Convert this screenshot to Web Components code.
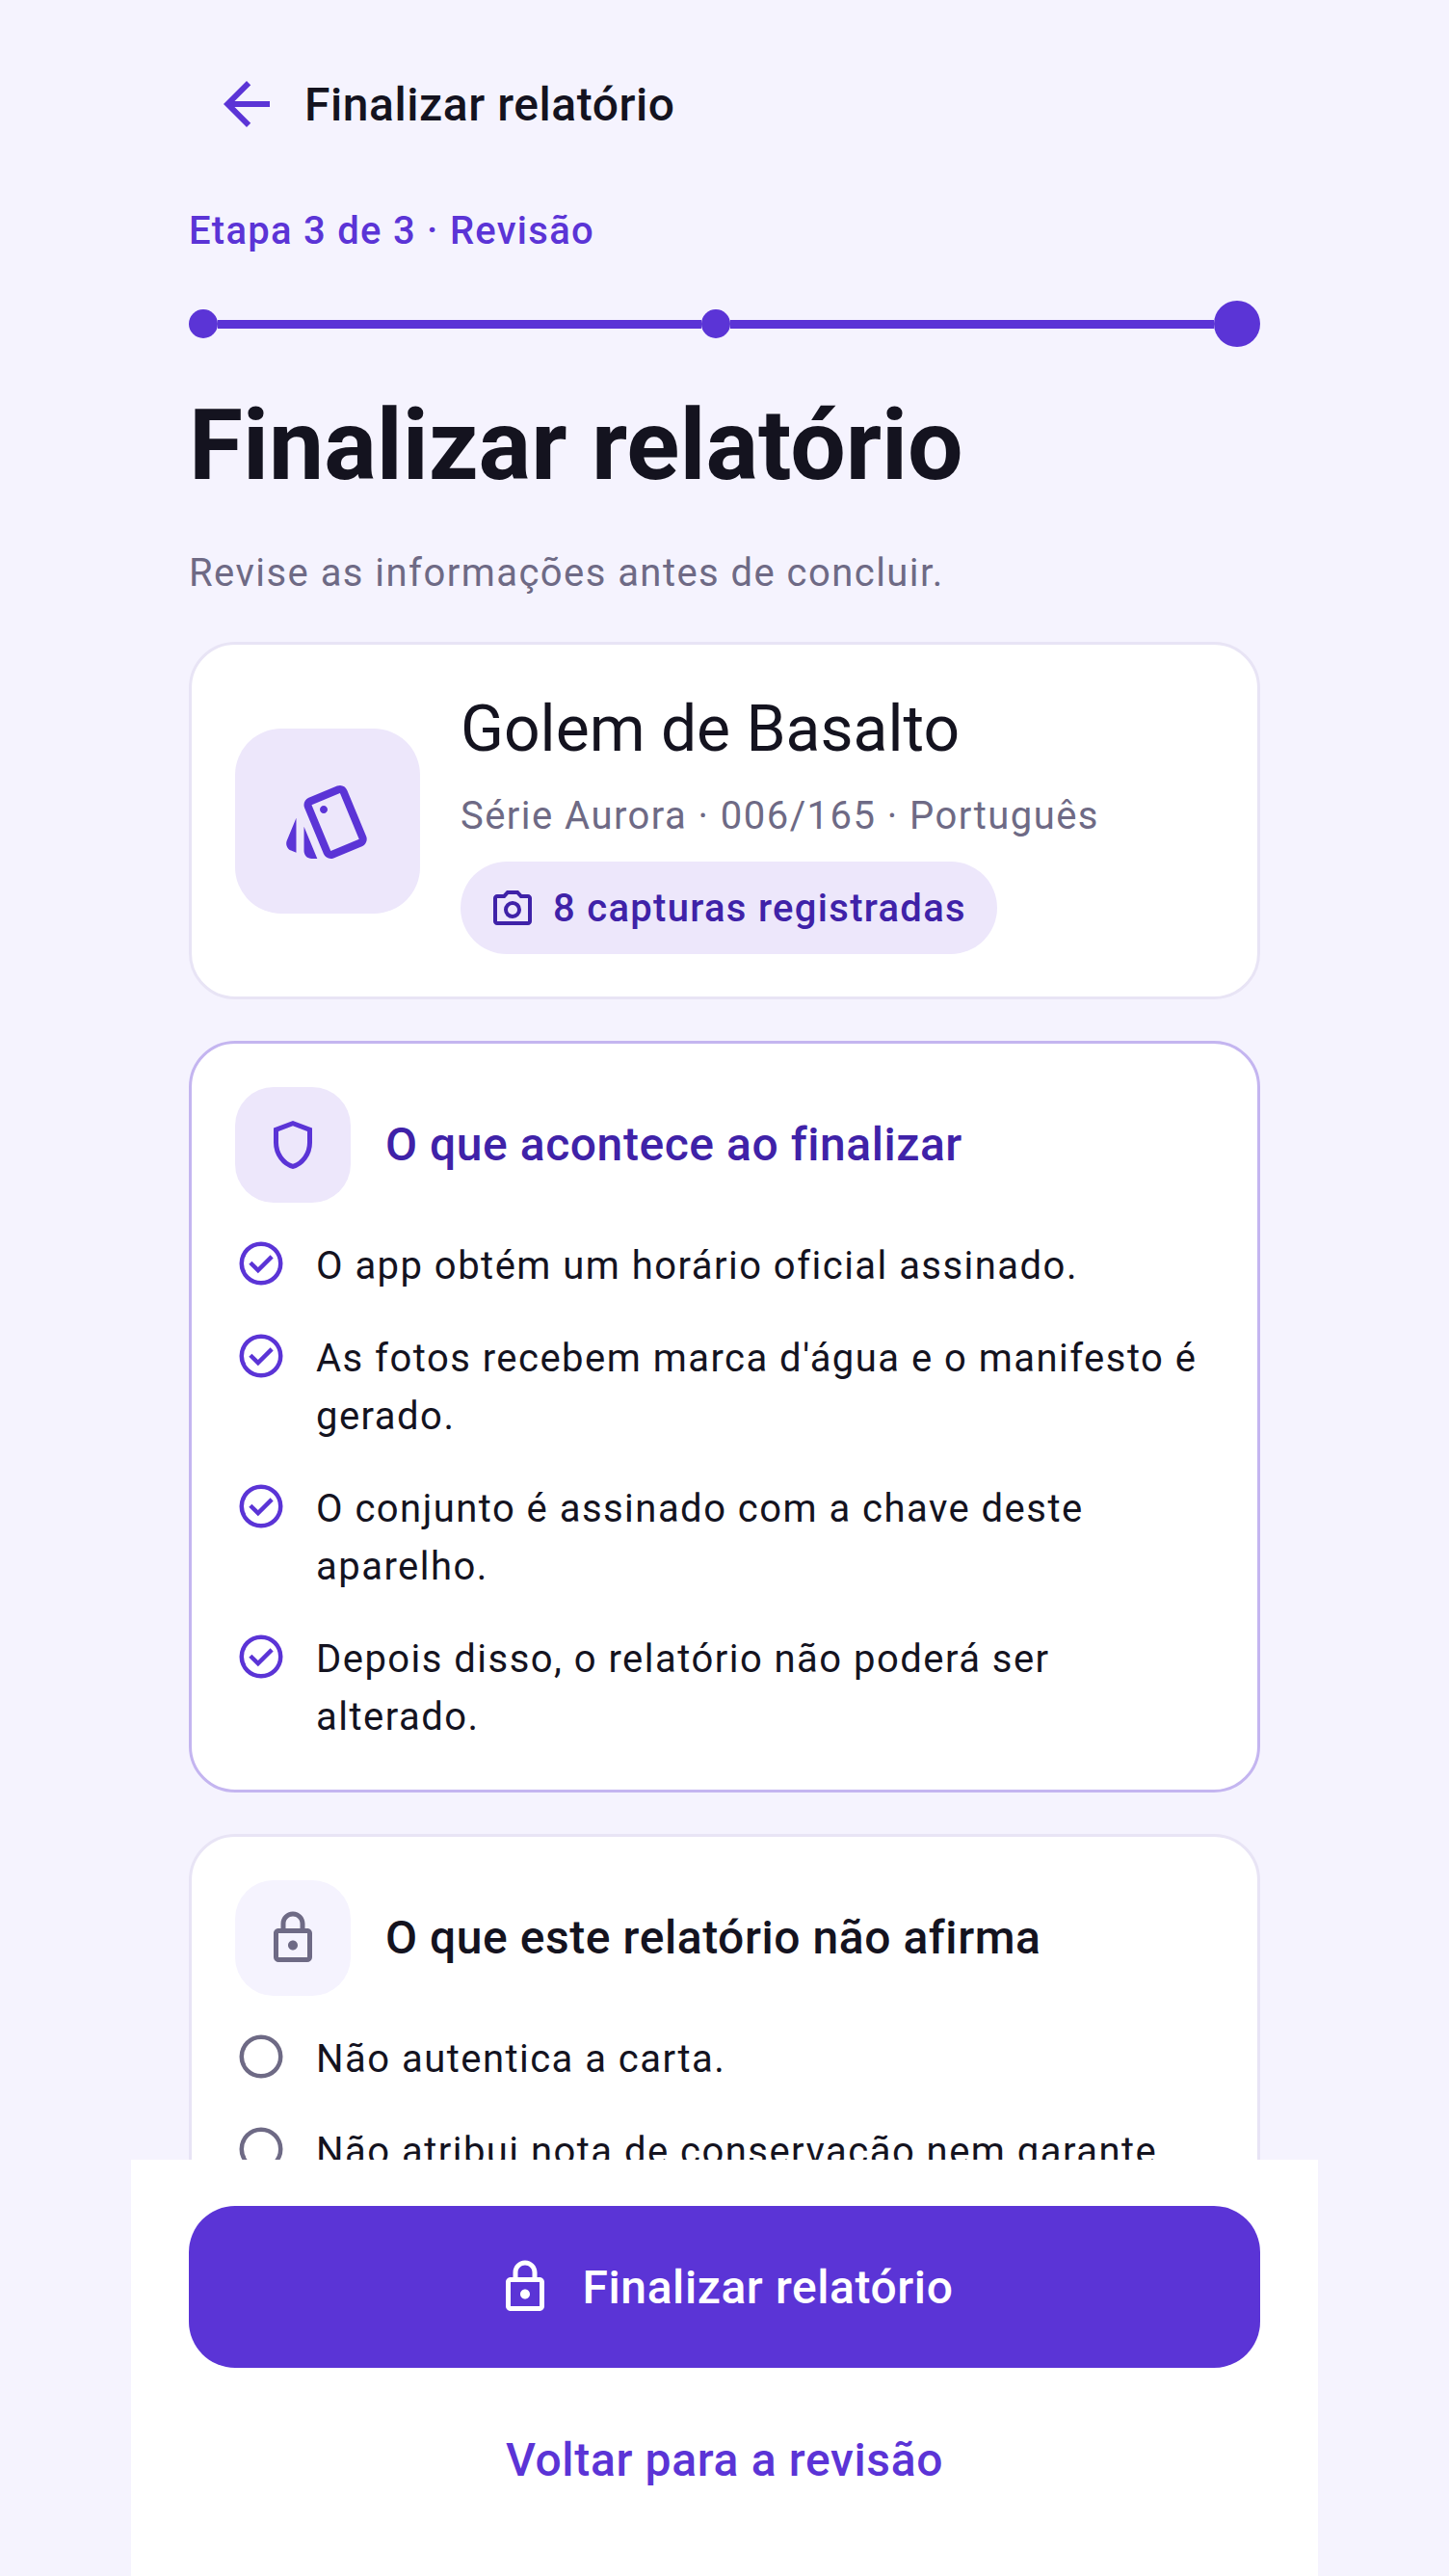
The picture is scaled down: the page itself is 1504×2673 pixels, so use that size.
<!doctype html>
<html lang="pt-BR"><head><meta charset="utf-8"><title>Finalizar relatório</title>
<style>
html,body{margin:0;height:100%;overflow:hidden;background:#F5F3FE;}
body{font-family:Roboto,"Noto Sans",sans-serif;color:#14131F;}
</style></head><body>
<app-screen>
  <top-bar>Finalizar relatório</top-bar>
  <step-progress label="Etapa 3 de 3 · Revisão"></step-progress>
  <page-heading sub="Revise as informações antes de concluir.">Finalizar relatório</page-heading>
  <report-card name="Golem de Basalto" meta="Série Aurora · 006/165 · Português" chip="8 capturas registradas"></report-card>
  <info-card tone="accent" icon="shield" heading="O que acontece ao finalizar">
    <info-row icon="check">O app obtém um horário oficial assinado.</info-row>
    <info-row icon="check">As fotos recebem marca d'água e o manifesto é gerado.</info-row>
    <info-row icon="check">O conjunto é assinado com a chave deste aparelho.</info-row>
    <info-row icon="check">Depois disso, o relatório não poderá ser alterado.</info-row>
  </info-card>
  <info-card tone="muted" icon="lock" heading="O que este relatório não afirma">
    <info-row icon="radio" tone="muted">Não autentica a carta.</info-row>
    <info-row icon="radio" tone="muted">Não atribui nota de conservação nem garante</info-row>
  </info-card>
  <bottom-bar>Finalizar relatório<span slot="secondary">Voltar para a revisão</span></bottom-bar>
</app-screen>
<script>
const PATHS={
 back:'M20 11H7.83l5.59-5.59L12 4l-8 8 8 8 1.41-1.41L7.83 13H20v-2z',
 shield:'M12 22q-3.475-.875-5.738-3.988T4 11.1V5l8-3 8 3v6.1q0 3.8-2.262 6.913T12 22Zm0-2.1q2.6-.825 4.3-3.3t1.7-5.5V6.375l-6-2.25-6 2.25V11.1q0 3.025 1.7 5.5t4.3 3.3Z',
 lock:'M18 8h-1V6c0-2.76-2.24-5-5-5S7 3.24 7 6v2H6c-1.1 0-2 .9-2 2v10c0 1.1.9 2 2 2h12c1.1 0 2-.9 2-2V10c0-1.1-.9-2-2-2zM9 6c0-1.66 1.34-3 3-3s3 1.34 3 3v2H9V6zm9 14H6V10h12v10zm-6-3c1.1 0 2-.9 2-2s-.9-2-2-2-2 .9-2 2 .9 2 2 2z',
 check:'M10.6 16.6l7.05-7.05-1.4-1.4-5.65 5.65-2.85-2.85-1.4 1.4 4.25 4.25ZM12 22q-2.075 0-3.9-.788t-3.175-2.137q-1.35-1.35-2.137-3.175T2 12q0-2.075.788-3.9t2.137-3.175q1.35-1.35 3.175-2.137T12 2q2.075 0 3.9.788t3.175 2.137q1.35 1.35 2.138 3.175T22 12q0 2.075-.788 3.9t-2.137 3.175q-1.35 1.35-3.175 2.138T12 22Zm0-2q3.35 0 5.675-2.325T20 12q0-3.35-2.325-5.675T12 4Q8.65 4 6.325 6.325T4 12q0 3.35 2.325 5.675T12 20Z',
 radio:'M12 22q-2.075 0-3.9-.788t-3.175-2.137q-1.35-1.35-2.137-3.175T2 12q0-2.075.788-3.9t2.137-3.175q1.35-1.35 3.175-2.137T12 2q2.075 0 3.9.788t3.175 2.137q1.35 1.35 2.138 3.175T22 12q0 2.075-.788 3.9t-2.137 3.175q-1.35 1.35-3.175 2.138T12 22Zm0-2q3.35 0 5.675-2.325T20 12q0-3.35-2.325-5.675T12 4Q8.65 4 6.325 6.325T4 12q0 3.35 2.325 5.675T12 20Z',
 camera:'M12 17.5q1.875 0 3.188-1.313T16.5 13q0-1.875-1.313-3.188T12 8.5q-1.875 0-3.188 1.313T7.5 13q0 1.875 1.313 3.188T12 17.5Zm0-2q-1.05 0-1.775-.725T9.5 13q0-1.05.725-1.775T12 10.5q1.05 0 1.775.725T14.5 13q0 1.05-.725 1.775T12 15.5ZM4 21q-.825 0-1.413-.587T2 19V7q0-.825.587-1.413T4 5h3.15L9 3h6l1.85 2H20q.825 0 1.413.587T22 7v12q0 .825-.587 1.413T20 21H4Zm0-2h16V7h-4.05l-1.825-2h-4.25L8.05 7H4v12Z',
 style:'M2.53 19.65l1.34.56v-9.03l-2.43 5.86c-.41 1.02.08 2.19 1.09 2.61zm19.5-3.7L17.07 3.98c-.31-.75-1.04-1.21-1.81-1.23-.26 0-.53.04-.79.15L7.1 5.95c-.75.31-1.21 1.03-1.23 1.8-.01.27.04.54.15.8l4.96 11.97c.31.76 1.05 1.22 1.83 1.23.26 0 .52-.05.77-.15l7.36-3.05c1.02-.42 1.51-1.59 1.09-2.6zm-9.2 3.8L7.87 7.79l7.35-3.04h.01l4.95 11.95-7.35 3.05zM11 10c.55 0 1-.45 1-1s-.45-1-1-1-1 .45-1 1 .45 1 1 1zm-5.12 9.75c0 1.1.9 2 2 2h1.45l-3.45-8.34v6.34z'
};
function def(name,html){
  customElements.define(name,class extends HTMLElement{
    constructor(){super();this.attachShadow({mode:'open'});}
    connectedCallback(){
      const a=n=>this.getAttribute(n)||'';
      this.shadowRoot.innerHTML=typeof html==='function'?html(a):html;
    }
  });
}
def('ic-on',a=>`<style>:host{display:block;flex:none;width:var(--size,48px);height:var(--size,48px);color:inherit}svg{display:block;width:100%;height:100%;fill:currentColor}</style><svg viewBox="0 0 24 24" aria-hidden="true"><path fill-rule="evenodd" d="${PATHS[a('name')]}"/></svg>`);
def('app-screen',`<style>:host{display:flex;flex-direction:column;height:2673px;box-sizing:border-box;padding:0 196px;overflow:hidden;position:relative}</style><slot></slot>`);
def('top-bar',`<style>:host{display:flex;align-items:center;gap:24px;height:72px;padding:72px 0 0 24px;flex:none;font-size:48px;font-weight:500;letter-spacing:.55px}ic-on{--size:72px;color:#5B34D6}</style><ic-on name="back"></ic-on><span><slot></slot></span>`);
def('step-progress',a=>`<style>:host{display:block;flex:none;margin-top:68px;color:#5B34D6}
.l{font-size:40px;font-weight:500;line-height:56px;letter-spacing:1.26px}
.t{display:flex;align-items:center;height:48px;margin-top:44px}
.d{flex:none;width:30px;height:30px;border-radius:50%;background:#5B34D6}.b{width:48px;height:48px}
.r{flex:1;height:9px;background:#5B34D6}</style>
<div class="l">${a('label')}</div><div class="t"><i class="d"></i><i class="r"></i><i class="d"></i><i class="r"></i><i class="d b"></i></div>`);
def('page-heading',a=>`<style>:host{display:block;flex:none;margin-top:46px}
h1{margin:0;font-size:102px;font-weight:700;line-height:112px;letter-spacing:0;color:#14131F}
p{margin:48.5px 0 0;font-size:40px;line-height:56px;letter-spacing:1.45px;color:#6E6A85}</style>
<h1><slot></slot></h1><p>${a('sub')}</p>`);
def('report-card',a=>`<style>:host{display:flex;align-items:center;gap:42px;flex:none;margin-top:43.5px;height:371px;box-sizing:border-box;padding:0 45px;background:#fff;border:3px solid #E8E4F5;border-radius:48px}
.box{flex:none;width:192px;height:192px;border-radius:48px;background:#EDE7FB;display:flex;align-items:center;justify-content:center;color:#5B34D6}
ic-on.s{--size:96px}.c{display:flex;flex-direction:column;align-items:flex-start;padding-top:5.5px}
h2{margin:0;font-size:66px;font-weight:400;line-height:76px;color:#14131F}
p{margin:24px 0 0;font-size:40px;line-height:56px;letter-spacing:1.45px;color:#6E6A85}
.chip{display:flex;align-items:center;gap:18px;height:96px;margin-top:19.5px;padding:0 32px 0 30px;border-radius:48px;background:#EDE7FB;color:#3F22A8;font-size:40px;font-weight:500;letter-spacing:1.3px}
.chip ic-on{--size:48px}</style>
<div class="box"><ic-on class="s" name="style"></ic-on></div>
<div class="c"><h2>${a('name')}</h2><p>${a('meta')}</p><div class="chip"><ic-on name="camera"></ic-on>${a('chip')}</div></div>`);
def('info-card',a=>{const acc=a('tone')==='accent';return `<style>:host{display:block;flex:none;margin-top:${acc?43:42.5}px;box-sizing:border-box;padding:45px;background:#fff;border:3px solid ${acc?'#C4B5F0':'#E8E4F5'};border-radius:48px}
.h{display:flex;align-items:center;gap:36px;margin-bottom:36px}
.box{flex:none;width:120px;height:120px;border-radius:40px;background:${acc?'#EDE7FB':'#F5F3FE'};display:flex;align-items:center;justify-content:center;color:${acc?'#5B34D6':'#6E6A85'}}
ic-on{--size:60px}
h3{margin:0;font-size:48px;font-weight:500;line-height:60px;letter-spacing:.55px;color:${acc?'#3F22A8':'#14131F'}}
.list{display:flex;flex-direction:column;gap:36px}</style>
<div class="h"><div class="box"><ic-on name="${a('icon')}"></ic-on></div><h3>${a('heading')}</h3></div><div class="list"><slot></slot></div>`});
def('info-row',a=>`<style>:host{display:flex;align-items:flex-start;gap:30px;font-size:40px;line-height:60px;letter-spacing:1.47px;color:#14131F}
ic-on{--size:54px;color:${a('tone')==='muted'?'#6E6A85':'#5B34D6'}}</style><ic-on name="${a('icon')}"></ic-on><span><slot></slot></span>`);
def('bottom-bar',`<style>:host{position:absolute;left:136px;width:1232px;top:2241px;height:432px;background:#fff;box-sizing:border-box;padding:48px 60px 0;display:flex;flex-direction:column}
.b{display:flex;align-items:center;justify-content:center;gap:30px;height:168px;border-radius:48px;background:#5B34D6;color:#fff;font-size:48px;font-weight:500;letter-spacing:.57px}
ic-on{--size:60px}
.s{margin-top:64px;text-align:center;font-size:48px;font-weight:500;line-height:64px;letter-spacing:.65px;color:#5B34D6}</style>
<div class="b"><ic-on name="lock"></ic-on><span><slot></slot></span></div><div class="s"><slot name="secondary"></slot></div>`);
</script>
</body></html>
